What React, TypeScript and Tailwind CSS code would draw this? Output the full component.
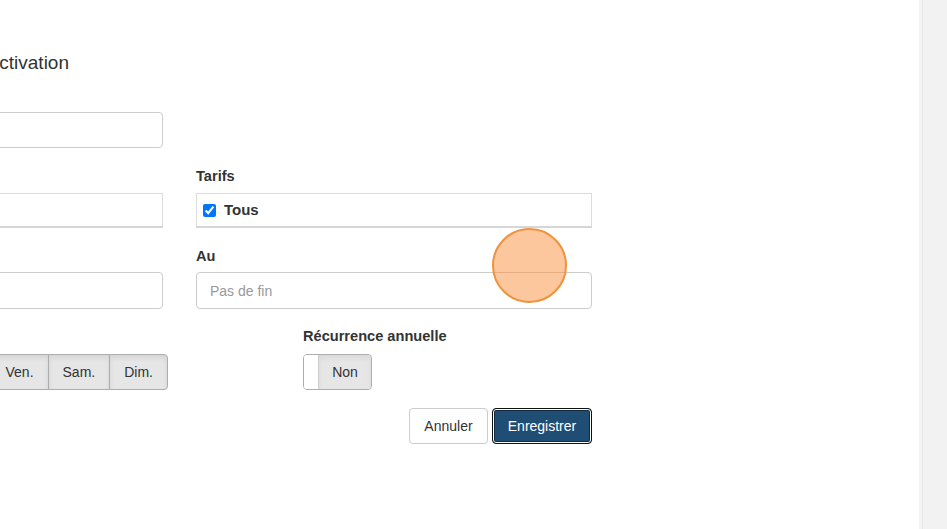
import React from 'react';

const days = ['Ven.', 'Sam.', 'Dim.'];

const Label: React.FC<{ children?: React.ReactNode; className?: string }> = ({ children, className = '' }) => (
    <label className={`block h-[20px] text-[14.6px] leading-[20px] font-bold text-[#333] ${className}`}>{children}</label>
);

const App: React.FC = () => {
    return (
        <div className="flex h-screen w-full overflow-hidden bg-white font-['Liberation_Sans',Arial,sans-serif] text-[14px] text-[#333]">
            <main className="relative flex-1 overflow-hidden bg-white">
                {/* Title, clipped at the left edge */}
                <div className="mt-[52px] flex w-[69px] justify-end overflow-hidden">
                    <h4 className="whitespace-nowrap text-[19px] leading-[22px] font-normal text-[#333]">Période d'activation</h4>
                </div>

                <div className="ml-[-233px] w-[825px]">
                    {/* Nom */}
                    <div className="mt-[38px] grid grid-cols-2 gap-x-[33px]">
                        <input
                            readOnly
                            className="h-[36px] rounded-[4px] border border-[#ccc] bg-white px-3 outline-none"
                        />
                        <div />
                    </div>

                    {/* Période / Tarifs */}
                    <div className="mt-[18px] grid grid-cols-2 gap-x-[33px]">
                        <div>
                            <Label />
                            <div className="mt-[7px] h-[35px] border border-[#dcdcdc] border-b-2 border-b-[#d6d6d6] bg-white" />
                        </div>
                        <div>
                            <Label>Tarifs</Label>
                            <div className="mt-[7px] flex h-[35px] items-center border border-[#dcdcdc] border-b-2 border-b-[#d6d6d6] bg-white pl-[6px]">
                                <input type="checkbox" checked readOnly className="m-0 h-[13px] w-[13px]" />
                                <span className="ml-[8px] text-[15px] font-bold text-[#333]">Tous</span>
                            </div>
                        </div>
                    </div>

                    {/* Du / Au */}
                    <div className="mt-[18px] grid grid-cols-2 gap-x-[33px]">
                        <div>
                            <Label />
                            <input
                                readOnly
                                className="mt-[6px] block h-[37px] w-full rounded-[4px] border border-[#ccc] bg-white px-3 outline-none"
                            />
                        </div>
                        <div>
                            <Label>Au</Label>
                            <input
                                readOnly
                                placeholder="Pas de fin"
                                className="mt-[6px] block h-[37px] w-full rounded-[4px] border border-[#ccc] bg-white px-[13px] text-[14px] outline-none placeholder:text-[#999]"
                            />
                        </div>
                    </div>

                    {/* Jours de la semaine / Récurrence */}
                    <div className="mt-[17px] grid grid-cols-2 gap-x-[33px]">
                        <div>
                            <Label />
                            <div className="mt-[8px] flex w-[401px] justify-end">
                                <div className="flex shrink-0">
                                    {days.map((d, i) => (
                                        <button
                                            key={d}
                                            className={`h-[36px] shrink-0 border border-[#adadad] bg-[#e6e6e6] px-[14px] text-[14px] text-[#333] shadow-[inset_0_3px_5px_rgba(0,0,0,0.08)] ${i > 0 ? '-ml-px' : 'rounded-l-[4px]'} ${i === days.length - 1 ? 'rounded-r-[4px]' : ''}`}
                                        >
                                            {d}
                                        </button>
                                    ))}
                                </div>
                            </div>
                        </div>
                        <div className="pl-[107px]">
                            <Label>Récurrence annuelle</Label>
                            <div className="mt-[8px] flex h-[36px] w-[69px] overflow-hidden rounded-[4px] border border-[#adadad]">
                                <div className="w-[15px] border-r border-[#ccc] bg-white" />
                                <div className="flex flex-1 items-center justify-center bg-[#e6e6e6] text-[14px] text-[#333] shadow-[inset_0_3px_5px_rgba(0,0,0,0.06)]">
                                    Non
                                </div>
                            </div>
                        </div>
                    </div>

                    {/* Actions */}
                    <div className="mt-[18px] flex justify-end gap-[4px]">
                        <button className="h-[36px] w-[79px] rounded-[4px] border border-[#ccc] bg-white text-[14px] text-[#333]">
                            Annuler
                        </button>
                        <button className="h-[36px] w-[100px] rounded-[4px] border border-[#111] bg-[#204d74] text-[14px] text-white shadow-[inset_0_0_0_1px_#fff,inset_0_0_0_2px_#122b40]">
                            Enregistrer
                        </button>
                    </div>
                </div>

                {/* Click marker */}
                <div className="pointer-events-none absolute left-[492px] top-[228px] h-[75px] w-[75px] rounded-full border-2 border-[#f0913c] bg-[#fa8f3a]/50" />
            </main>
            <aside className="flex w-[28px] shrink-0 bg-[#f2f2f2]">
                <div className="ml-[3px] w-px bg-[#e9e9e9]" />
            </aside>
        </div>
    );
};

export default App;
